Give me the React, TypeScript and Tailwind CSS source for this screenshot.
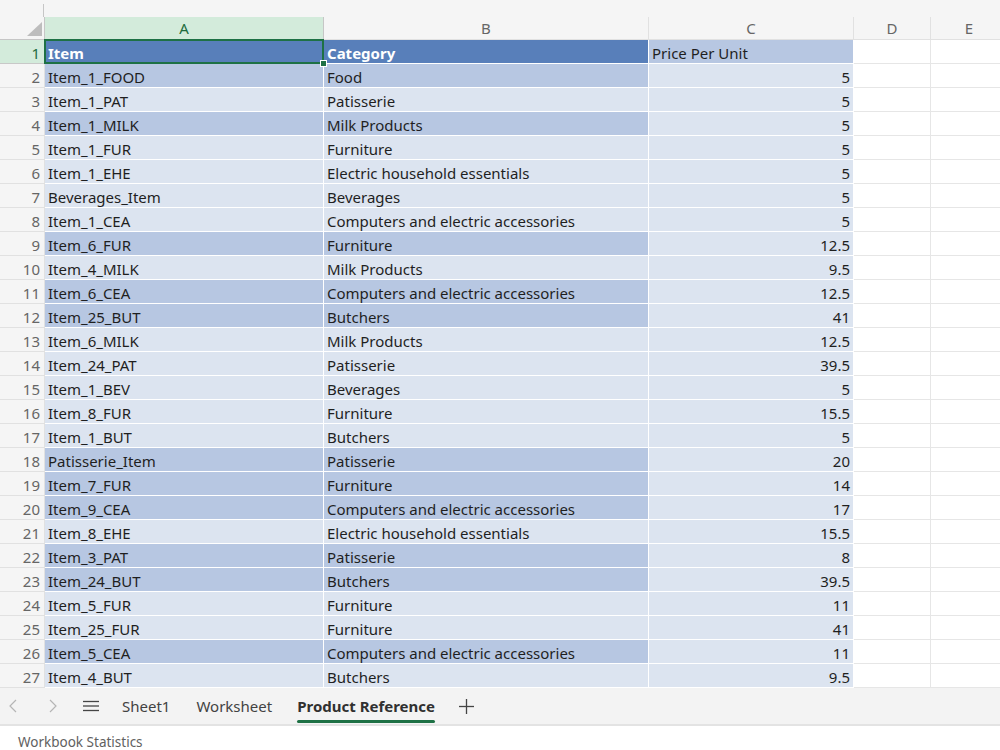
import React from 'react';

type Row = { item: string; category: string; price: string; band: boolean };

const rows: Row[] = [
  { item: 'Item_1_FOOD', category: 'Food', price: '5', band: true },
  { item: 'Item_1_PAT', category: 'Patisserie', price: '5', band: false },
  { item: 'Item_1_MILK', category: 'Milk Products', price: '5', band: true },
  { item: 'Item_1_FUR', category: 'Furniture', price: '5', band: false },
  { item: 'Item_1_EHE', category: 'Electric household essentials', price: '5', band: false },
  { item: 'Beverages_Item', category: 'Beverages', price: '5', band: false },
  { item: 'Item_1_CEA', category: 'Computers and electric accessories', price: '5', band: false },
  { item: 'Item_6_FUR', category: 'Furniture', price: '12.5', band: true },
  { item: 'Item_4_MILK', category: 'Milk Products', price: '9.5', band: false },
  { item: 'Item_6_CEA', category: 'Computers and electric accessories', price: '12.5', band: true },
  { item: 'Item_25_BUT', category: 'Butchers', price: '41', band: true },
  { item: 'Item_6_MILK', category: 'Milk Products', price: '12.5', band: false },
  { item: 'Item_24_PAT', category: 'Patisserie', price: '39.5', band: false },
  { item: 'Item_1_BEV', category: 'Beverages', price: '5', band: false },
  { item: 'Item_8_FUR', category: 'Furniture', price: '15.5', band: false },
  { item: 'Item_1_BUT', category: 'Butchers', price: '5', band: false },
  { item: 'Patisserie_Item', category: 'Patisserie', price: '20', band: true },
  { item: 'Item_7_FUR', category: 'Furniture', price: '14', band: true },
  { item: 'Item_9_CEA', category: 'Computers and electric accessories', price: '17', band: true },
  { item: 'Item_8_EHE', category: 'Electric household essentials', price: '15.5', band: false },
  { item: 'Item_3_PAT', category: 'Patisserie', price: '8', band: true },
  { item: 'Item_24_BUT', category: 'Butchers', price: '39.5', band: true },
  { item: 'Item_5_FUR', category: 'Furniture', price: '11', band: false },
  { item: 'Item_25_FUR', category: 'Furniture', price: '41', band: false },
  { item: 'Item_5_CEA', category: 'Computers and electric accessories', price: '11', band: true },
  { item: 'Item_4_BUT', category: 'Butchers', price: '9.5', band: false },
];

const cols = 'grid grid-cols-[45px_279px_325px_205px_77px_77px] grid-rows-[100%]';

const RowHead: React.FC<{ n: number; active?: boolean }> = ({ n, active }) => (
  <div
    className={
      active
        ? 'flex items-center justify-end border-r border-b border-[#c8c8c8] bg-[#d3ebdb] pt-[2px] pr-[4px] text-[#1e6b3e]'
        : 'flex items-center justify-end border-r border-b border-[#e1e1e1] bg-[#f5f5f5] pt-[2px] pr-[4px] text-[#666]'
    }
  >
    {n}
  </div>
);

const Empty = () => <div className="border-r border-b border-[#e6e6e6] bg-white" />;

export default function App() {
  return (
    <div className="flex h-[750px] w-[1000px] flex-col overflow-hidden bg-white font-['Noto_Sans',sans-serif] text-[15px] text-[#1f1f1f]">
      {/* sheet area */}
      <div className="h-[688px] shrink-0 overflow-hidden leading-5">
        <div className="flex h-[17px] items-end bg-[#f5f5f5]">
          <div className="ml-[43px] h-[13px] w-px bg-[#c6c6c6]" />
        </div>

        {/* column letters */}
        <div className={`${cols} h-[23px] bg-[#f5f5f5] text-[#666]`}>
          <div className="relative border-r border-b border-[#c6c6c6]">
            <svg className="absolute left-[27px] top-[5px]" width="15" height="14" viewBox="0 0 15 14">
              <polygon points="15,0 15,14 0,14" fill="#bdbdbd" />
            </svg>
          </div>
          <div className="flex items-center justify-center border-r border-b border-[#c6c6c6] bg-[#d3ebdb] text-[#1e6b3e]">A</div>
          <div className="flex items-center justify-center border-r border-b border-[#e1e1e1]">B</div>
          <div className="flex items-center justify-center border-r border-b border-[#e1e1e1]">C</div>
          <div className="flex items-center justify-center border-r border-b border-[#e1e1e1]">D</div>
          <div className="flex items-center justify-center border-r border-b border-[#e1e1e1]">E</div>
        </div>

        {/* table header row */}
        <div className={`${cols} h-[24px]`}>
          <RowHead n={1} active />
          <div className="relative flex items-center border-r border-b border-white bg-[#587fba] pt-[2px] pl-[3px] font-bold text-white">
            Item
            <div className="pointer-events-none absolute -left-px -top-px -right-px -bottom-px border-2 border-[#1e7145]" />
            <div className="absolute -right-[4px] -bottom-[4px] h-[7px] w-[7px] border border-white bg-[#1e7145]" />
          </div>
          <div className="flex items-center border-r border-b border-white bg-[#587fba] pt-[2px] pl-[3px] font-bold text-white">Category</div>
          <div className="flex items-center border-r border-b border-white bg-[#b7c7e2] pt-[2px] pl-[3px]">Price Per Unit</div>
          <Empty />
          <Empty />
        </div>

        {rows.map((r, i) => (
          <div key={r.item} className={`${cols} h-[24px]`}>
            <RowHead n={i + 2} />
            <div className={`flex items-center overflow-hidden whitespace-nowrap border-r border-b border-white pt-[2px] pl-[3px] ${r.band ? 'bg-[#b7c7e2]' : 'bg-[#dce4f0]'}`}>
              {r.item}
            </div>
            <div className={`flex items-center overflow-hidden whitespace-nowrap border-r border-b border-white pt-[2px] pl-[3px] ${r.band ? 'bg-[#b7c7e2]' : 'bg-[#dce4f0]'}`}>
              {r.category}
            </div>
            <div className="flex items-center justify-end border-r border-b border-white bg-[#dce4f0] pt-[2px] pr-[3px]">{r.price}</div>
            <Empty />
            <Empty />
          </div>
        ))}
      </div>

      {/* sheet tabs */}
      <div className="flex h-[38px] shrink-0 items-center border-b-2 border-[#e3e3e3] bg-[#f3f3f3] text-[15px] text-[#424242]">
        <svg className="ml-[9px]" width="8" height="14" viewBox="0 0 8 14">
          <polyline points="7,1 1,7 7,13" fill="none" stroke="#b5b5b5" strokeWidth="1.2" />
        </svg>
        <svg className="ml-[32px]" width="8" height="14" viewBox="0 0 8 14">
          <polyline points="1,1 7,7 1,13" fill="none" stroke="#b5b5b5" strokeWidth="1.2" />
        </svg>
        <svg className="ml-[26px]" width="16" height="12" viewBox="0 0 16 12">
          <line x1="0" y1="1.5" x2="16" y2="1.5" stroke="#444" strokeWidth="1.3" />
          <line x1="0" y1="6" x2="16" y2="6" stroke="#444" strokeWidth="1.3" />
          <line x1="0" y1="10.5" x2="16" y2="10.5" stroke="#444" strokeWidth="1.3" />
        </svg>
        <span className="ml-[23px]">Sheet1</span>
        <span className="ml-[26px]">Worksheet</span>
        <div className="relative ml-[25px] flex h-full items-center">
          <span className="font-bold text-[#303030]">Product Reference</span>
          <div className="absolute bottom-[1px] left-0 right-0 h-[3px] rounded-sm bg-[#1e7145]" />
        </div>
        <svg className="ml-[24px]" width="15" height="15" viewBox="0 0 15 15">
          <line x1="7.5" y1="0" x2="7.5" y2="15" stroke="#444" strokeWidth="1.3" />
          <line x1="0" y1="7.5" x2="15" y2="7.5" stroke="#444" strokeWidth="1.3" />
        </svg>
      </div>

      {/* status bar */}
      <div className="flex h-[24px] shrink-0 items-start bg-white pt-[6px] pl-[18px] text-[13.5px] text-[#616161]">
        Workbook Statistics
      </div>
    </div>
  );
}
